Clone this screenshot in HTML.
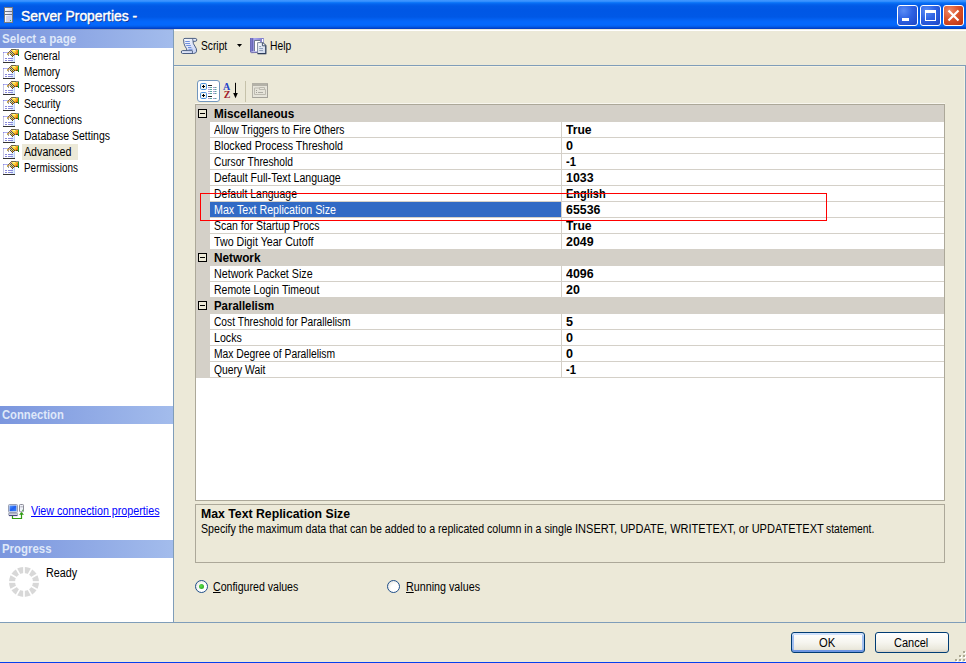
<!DOCTYPE html>
<html><head><meta charset="utf-8"><title>Server Properties</title>
<style>
*{box-sizing:border-box;margin:0;padding:0}
html,body{width:966px;height:663px;overflow:hidden;background:#ece9d8}
body{position:relative;font-family:"Liberation Sans",sans-serif;font-size:11px;color:#000}
.abs{position:absolute}
.t{position:absolute;white-space:pre;transform-origin:0 0}
svg{position:absolute;overflow:visible}
#titlebar{left:0;top:0;width:966px;height:29px;background:linear-gradient(to bottom,#3e96ff 0,#3a92ff 1.2px,#0c76f8 2.6px,#0464ee 4px,#015ae6 6px,#0057e5 10px,#0058e6 17px,#0463f4 20px,#0468fc 22px,#0468fc 25px,#035de9 26.5px,#0247d0 28px,#003cc0 29px)}
#left{left:0;top:29px;width:173px;height:593px;background:#fff}
.hdr{position:absolute;left:0;width:173px;height:18px;background:linear-gradient(to right,#7b96de,#a3bcec)}
#grid{left:195px;top:104px;width:750px;height:397px;background:#fff;border:1px solid #aca899}
.gl{position:absolute;left:210px;width:734px;height:1px;background:#d4d0c8}
.btn{position:absolute;height:21px;width:74px;border:1px solid #003c74;border-radius:3px;background:linear-gradient(to bottom,#fff 0,#f6f5ef 50%,#eae8dc 85%,#d6d0c5 100%)}
.cap{position:absolute;top:5px;width:21px;height:21px;border:1px solid #fff;border-radius:3px}
</style></head><body>

<!-- window chrome -->
<div id="titlebar" class="abs"></div>
<div id="left" class="abs"></div>
<div class="hdr" style="top:29px;height:19px"></div>
<div class="abs" style="left:0;top:29px;width:173px;height:1px;background:#8a9cc6"></div>
<div class="hdr" style="top:406px"></div>
<div class="hdr" style="top:540px"></div>
<!-- selected page -->
<div class="abs" style="left:22px;top:144px;width:56px;height:16px;background:#ece9d8"></div>
<!-- right panel frame -->
<div class="abs" style="left:173px;top:29px;width:1px;height:594px;background:#7f9db9"></div>
<div class="abs" style="left:174px;top:30px;width:792px;height:1px;background:#fff"></div>
<div class="abs" style="left:965px;top:65px;width:1px;height:558px;background:#7f9db9"></div>
<div class="abs" style="left:964px;top:66px;width:1px;height:556px;background:#f6f2e2"></div>
<div class="abs" style="left:0;top:622px;width:966px;height:1px;background:#7f9db9"></div>
<div class="abs" style="left:174px;top:65px;width:792px;height:1px;background:#7f9db9"></div>
<div class="abs" style="left:174px;top:66px;width:790px;height:1px;background:#f6f2e2"></div>
<!-- bottom blue edge -->
<div class="abs" style="left:0;top:662px;width:966px;height:1px;background:#0540ee;z-index:5"></div>
<!-- property grid -->
<div class="abs" style="left:195px;top:103px;width:750px;height:1px;background:#f8f6ee"></div>
<div id="grid" class="abs"></div>
<div class="abs" style="left:196px;top:105px;width:14px;height:273px;background:#d4d0c8"></div>
<div class="abs" style="left:196px;top:105px;width:748px;height:1px;background:#d4d0c8"></div>
<div class="abs" style="left:561px;top:122px;width:1px;height:256px;background:#d4d0c8"></div>
<!-- description -->
<div class="abs" style="left:195px;top:504px;width:750px;height:59px;border:1px solid #aca899"></div>
<!-- buttons -->
<div class="btn" style="left:791px;top:632px;box-shadow:inset 0 2px 0 #cfe1fb,inset 0 -2px 0 #6f96e2,inset 2px 0 0 #a3c0f0,inset -2px 0 0 #a3c0f0"></div>
<div class="btn" style="left:875px;top:632px"></div>

<div class="abs" style="left:196px;top:106px;width:748px;height:16px;background:#d4d0c8"></div>
<div class="abs" style="left:198px;top:109px;width:9px;height:9px;border:1px solid #000;background:#ece9d8"></div><div class="abs" style="left:200px;top:113px;width:5px;height:1px;background:#000"></div>
<div class="abs" style="left:210px;top:202px;width:351px;height:15px;background:#316ac5"></div>
<div class="abs" style="left:196px;top:250px;width:748px;height:16px;background:#d4d0c8"></div>
<div class="abs" style="left:198px;top:253px;width:9px;height:9px;border:1px solid #000;background:#ece9d8"></div><div class="abs" style="left:200px;top:257px;width:5px;height:1px;background:#000"></div>
<div class="abs" style="left:196px;top:298px;width:748px;height:16px;background:#d4d0c8"></div>
<div class="abs" style="left:198px;top:301px;width:9px;height:9px;border:1px solid #000;background:#ece9d8"></div><div class="abs" style="left:200px;top:305px;width:5px;height:1px;background:#000"></div>
<div class="gl" style="top:137px"></div>
<div class="gl" style="top:153px"></div>
<div class="gl" style="top:169px"></div>
<div class="gl" style="top:185px"></div>
<div class="gl" style="top:201px"></div>
<div class="gl" style="top:217px"></div>
<div class="gl" style="top:233px"></div>
<div class="gl" style="top:249px"></div>
<div class="gl" style="top:281px"></div>
<div class="gl" style="top:297px"></div>
<div class="gl" style="top:329px"></div>
<div class="gl" style="top:345px"></div>
<div class="gl" style="top:361px"></div>
<div class="gl" style="top:377px"></div>
<!-- title bar icon -->
<svg style="left:0;top:0" width="24" height="29" viewBox="0 0 24 29">
<defs><linearGradient id="sv" x1="0" y1="0" x2="1" y2="0"><stop offset="0" stop-color="#fff"/><stop offset="1" stop-color="#c9cfee"/></linearGradient></defs>
<rect x="4.5" y="7.5" width="8" height="15" fill="url(#sv)" stroke="#7b7b7b"/>
<rect x="5" y="11" width="7" height="1" fill="#6e7486"/><rect x="5" y="14" width="7" height="1" fill="#6e7486"/>
<rect x="6" y="16" width="5" height="6" fill="#c3c8ea" opacity=".7"/>
<rect x="10" y="20" width="1" height="1" fill="#35d01a"/>
</svg>
<!-- caption buttons -->
<div class="cap" style="left:897px;background:radial-gradient(circle at 30% 25%,#5a8cf5 0,#2e62e3 45%,#1c45c4 100%)"></div>
<div class="abs" style="left:902px;top:18px;width:7px;height:3px;background:#fff"></div>
<div class="cap" style="left:920px;background:radial-gradient(circle at 30% 25%,#5a8cf5 0,#2e62e3 45%,#1c45c4 100%)"></div>
<div class="abs" style="left:925px;top:10px;width:11px;height:11px;border:1px solid #fff;border-top-width:3px"></div>
<div class="cap" style="left:943px;background:radial-gradient(circle at 30% 25%,#ee8a68 0,#db532b 45%,#b83010 100%)"></div>
<svg style="left:943px;top:5px" width="21" height="21" viewBox="0 0 21 21"><path d="M5.5 5.5L15.5 15.5M15.5 5.5L5.5 15.5" stroke="#fff" stroke-width="2.2" stroke-linecap="butt"/></svg>

<svg style="left:0;top:48px" width="22" height="16" viewBox="0 0 22 16" shape-rendering="crispEdges">
<rect x="3.5" y="4.5" width="11" height="10" fill="#fff" stroke="#c6c6e4"/>
<rect x="11" y="9" width="3" height="5" fill="#dcecff"/>
<path d="M3 4.5H8" stroke="#b0b0f4"/><rect x="3" y="4" width="1" height="1" fill="#8c8ce4"/>
<path d="M14.5 8V14" stroke="#bcd0f8" fill="none"/>
<path d="M3 14.5H15" stroke="#333" fill="none"/>
<path d="M5 10.5h2M8 10.5h5M5 12.5h2M8 12.5h5" stroke="#8888da"/>
<rect x="11" y="1" width="1" height="1" fill="#6e6a48"/><rect x="12" y="1" width="1" height="1" fill="#6e6a48"/><rect x="13" y="1" width="1" height="1" fill="#6e6a48"/><rect x="14" y="1" width="1" height="1" fill="#6e6a48"/><rect x="15" y="1" width="1" height="1" fill="#6e6a48"/><rect x="16" y="1" width="1" height="1" fill="#8e8e88"/><rect x="17" y="1" width="1" height="1" fill="#8e8e88"/><rect x="18" y="1" width="1" height="1" fill="#8e8e88"/><rect x="10" y="2" width="1" height="1" fill="#6e6a48"/><rect x="11" y="2" width="1" height="1" fill="#f2b894"/><rect x="12" y="2" width="1" height="1" fill="#ffd83c"/><rect x="13" y="2" width="1" height="1" fill="#fff6a0"/><rect x="14" y="2" width="1" height="1" fill="#fff6a0"/><rect x="15" y="2" width="1" height="1" fill="#ffd83c"/><rect x="16" y="2" width="1" height="1" fill="#f8a820"/><rect x="17" y="2" width="1" height="1" fill="#f8a820"/><rect x="18" y="2" width="1" height="1" fill="#1f9e28"/><rect x="9" y="3" width="1" height="1" fill="#6e6a48"/><rect x="10" y="3" width="1" height="1" fill="#f2b894"/><rect x="11" y="3" width="1" height="1" fill="#45456c"/><rect x="12" y="3" width="1" height="1" fill="#f4ec50"/><rect x="13" y="3" width="1" height="1" fill="#ffd83c"/><rect x="14" y="3" width="1" height="1" fill="#ffd83c"/><rect x="15" y="3" width="1" height="1" fill="#ffd83c"/><rect x="16" y="3" width="1" height="1" fill="#f8a820"/><rect x="17" y="3" width="1" height="1" fill="#e07c10"/><rect x="18" y="3" width="1" height="1" fill="#1f9e28"/><rect x="8" y="4" width="1" height="1" fill="#6e6a48"/><rect x="9" y="4" width="1" height="1" fill="#f2b894"/><rect x="10" y="4" width="1" height="1" fill="#45456c"/><rect x="11" y="4" width="1" height="1" fill="#f4ec50"/><rect x="12" y="4" width="1" height="1" fill="#45456c"/><rect x="13" y="4" width="1" height="1" fill="#ffd83c"/><rect x="14" y="4" width="1" height="1" fill="#ffd83c"/><rect x="15" y="4" width="1" height="1" fill="#f8a820"/><rect x="16" y="4" width="1" height="1" fill="#f8a820"/><rect x="17" y="4" width="1" height="1" fill="#e07c10"/><rect x="18" y="4" width="1" height="1" fill="#1f9e28"/><rect x="7" y="5" width="1" height="1" fill="#c8a850"/><rect x="8" y="5" width="1" height="1" fill="#c8a850"/><rect x="9" y="5" width="1" height="1" fill="#f2b894"/><rect x="10" y="5" width="1" height="1" fill="#f4ec50"/><rect x="11" y="5" width="1" height="1" fill="#45456c"/><rect x="12" y="5" width="1" height="1" fill="#f4ec50"/><rect x="13" y="5" width="1" height="1" fill="#45456c"/><rect x="14" y="5" width="1" height="1" fill="#f8a820"/><rect x="15" y="5" width="1" height="1" fill="#f8a820"/><rect x="16" y="5" width="1" height="1" fill="#e07c10"/><rect x="17" y="5" width="1" height="1" fill="#e07c10"/><rect x="18" y="5" width="1" height="1" fill="#1f9e28"/><rect x="7" y="6" width="1" height="1" fill="#c8a850"/><rect x="8" y="6" width="1" height="1" fill="#9c9c9c"/><rect x="10" y="6" width="1" height="1" fill="#45456c"/><rect x="11" y="6" width="1" height="1" fill="#f4ec50"/><rect x="12" y="6" width="1" height="1" fill="#45456c"/><rect x="13" y="6" width="1" height="1" fill="#ffd83c"/><rect x="14" y="6" width="1" height="1" fill="#4c4a20"/><rect x="15" y="6" width="1" height="1" fill="#e07c10"/><rect x="16" y="6" width="1" height="1" fill="#4c4a20"/><rect x="17" y="6" width="1" height="1" fill="#4c4a20"/><rect x="18" y="6" width="1" height="1" fill="#1f9e28"/><rect x="8" y="7" width="1" height="1" fill="#9c9c9c"/><rect x="11" y="7" width="1" height="1" fill="#45456c"/><rect x="12" y="7" width="1" height="1" fill="#f8a820"/><rect x="13" y="7" width="1" height="1" fill="#45456c"/><rect x="18" y="7" width="1" height="1" fill="#157018"/><rect x="12" y="8" width="1" height="1" fill="#4c4a20"/>
</svg>
<svg style="left:0;top:64px" width="22" height="16" viewBox="0 0 22 16" shape-rendering="crispEdges">
<rect x="3.5" y="4.5" width="11" height="10" fill="#fff" stroke="#c6c6e4"/>
<rect x="11" y="9" width="3" height="5" fill="#dcecff"/>
<path d="M3 4.5H8" stroke="#b0b0f4"/><rect x="3" y="4" width="1" height="1" fill="#8c8ce4"/>
<path d="M14.5 8V14" stroke="#bcd0f8" fill="none"/>
<path d="M3 14.5H15" stroke="#333" fill="none"/>
<path d="M5 10.5h2M8 10.5h5M5 12.5h2M8 12.5h5" stroke="#8888da"/>
<rect x="11" y="1" width="1" height="1" fill="#6e6a48"/><rect x="12" y="1" width="1" height="1" fill="#6e6a48"/><rect x="13" y="1" width="1" height="1" fill="#6e6a48"/><rect x="14" y="1" width="1" height="1" fill="#6e6a48"/><rect x="15" y="1" width="1" height="1" fill="#6e6a48"/><rect x="16" y="1" width="1" height="1" fill="#8e8e88"/><rect x="17" y="1" width="1" height="1" fill="#8e8e88"/><rect x="18" y="1" width="1" height="1" fill="#8e8e88"/><rect x="10" y="2" width="1" height="1" fill="#6e6a48"/><rect x="11" y="2" width="1" height="1" fill="#f2b894"/><rect x="12" y="2" width="1" height="1" fill="#ffd83c"/><rect x="13" y="2" width="1" height="1" fill="#fff6a0"/><rect x="14" y="2" width="1" height="1" fill="#fff6a0"/><rect x="15" y="2" width="1" height="1" fill="#ffd83c"/><rect x="16" y="2" width="1" height="1" fill="#f8a820"/><rect x="17" y="2" width="1" height="1" fill="#f8a820"/><rect x="18" y="2" width="1" height="1" fill="#1f9e28"/><rect x="9" y="3" width="1" height="1" fill="#6e6a48"/><rect x="10" y="3" width="1" height="1" fill="#f2b894"/><rect x="11" y="3" width="1" height="1" fill="#45456c"/><rect x="12" y="3" width="1" height="1" fill="#f4ec50"/><rect x="13" y="3" width="1" height="1" fill="#ffd83c"/><rect x="14" y="3" width="1" height="1" fill="#ffd83c"/><rect x="15" y="3" width="1" height="1" fill="#ffd83c"/><rect x="16" y="3" width="1" height="1" fill="#f8a820"/><rect x="17" y="3" width="1" height="1" fill="#e07c10"/><rect x="18" y="3" width="1" height="1" fill="#1f9e28"/><rect x="8" y="4" width="1" height="1" fill="#6e6a48"/><rect x="9" y="4" width="1" height="1" fill="#f2b894"/><rect x="10" y="4" width="1" height="1" fill="#45456c"/><rect x="11" y="4" width="1" height="1" fill="#f4ec50"/><rect x="12" y="4" width="1" height="1" fill="#45456c"/><rect x="13" y="4" width="1" height="1" fill="#ffd83c"/><rect x="14" y="4" width="1" height="1" fill="#ffd83c"/><rect x="15" y="4" width="1" height="1" fill="#f8a820"/><rect x="16" y="4" width="1" height="1" fill="#f8a820"/><rect x="17" y="4" width="1" height="1" fill="#e07c10"/><rect x="18" y="4" width="1" height="1" fill="#1f9e28"/><rect x="7" y="5" width="1" height="1" fill="#c8a850"/><rect x="8" y="5" width="1" height="1" fill="#c8a850"/><rect x="9" y="5" width="1" height="1" fill="#f2b894"/><rect x="10" y="5" width="1" height="1" fill="#f4ec50"/><rect x="11" y="5" width="1" height="1" fill="#45456c"/><rect x="12" y="5" width="1" height="1" fill="#f4ec50"/><rect x="13" y="5" width="1" height="1" fill="#45456c"/><rect x="14" y="5" width="1" height="1" fill="#f8a820"/><rect x="15" y="5" width="1" height="1" fill="#f8a820"/><rect x="16" y="5" width="1" height="1" fill="#e07c10"/><rect x="17" y="5" width="1" height="1" fill="#e07c10"/><rect x="18" y="5" width="1" height="1" fill="#1f9e28"/><rect x="7" y="6" width="1" height="1" fill="#c8a850"/><rect x="8" y="6" width="1" height="1" fill="#9c9c9c"/><rect x="10" y="6" width="1" height="1" fill="#45456c"/><rect x="11" y="6" width="1" height="1" fill="#f4ec50"/><rect x="12" y="6" width="1" height="1" fill="#45456c"/><rect x="13" y="6" width="1" height="1" fill="#ffd83c"/><rect x="14" y="6" width="1" height="1" fill="#4c4a20"/><rect x="15" y="6" width="1" height="1" fill="#e07c10"/><rect x="16" y="6" width="1" height="1" fill="#4c4a20"/><rect x="17" y="6" width="1" height="1" fill="#4c4a20"/><rect x="18" y="6" width="1" height="1" fill="#1f9e28"/><rect x="8" y="7" width="1" height="1" fill="#9c9c9c"/><rect x="11" y="7" width="1" height="1" fill="#45456c"/><rect x="12" y="7" width="1" height="1" fill="#f8a820"/><rect x="13" y="7" width="1" height="1" fill="#45456c"/><rect x="18" y="7" width="1" height="1" fill="#157018"/><rect x="12" y="8" width="1" height="1" fill="#4c4a20"/>
</svg>
<svg style="left:0;top:80px" width="22" height="16" viewBox="0 0 22 16" shape-rendering="crispEdges">
<rect x="3.5" y="4.5" width="11" height="10" fill="#fff" stroke="#c6c6e4"/>
<rect x="11" y="9" width="3" height="5" fill="#dcecff"/>
<path d="M3 4.5H8" stroke="#b0b0f4"/><rect x="3" y="4" width="1" height="1" fill="#8c8ce4"/>
<path d="M14.5 8V14" stroke="#bcd0f8" fill="none"/>
<path d="M3 14.5H15" stroke="#333" fill="none"/>
<path d="M5 10.5h2M8 10.5h5M5 12.5h2M8 12.5h5" stroke="#8888da"/>
<rect x="11" y="1" width="1" height="1" fill="#6e6a48"/><rect x="12" y="1" width="1" height="1" fill="#6e6a48"/><rect x="13" y="1" width="1" height="1" fill="#6e6a48"/><rect x="14" y="1" width="1" height="1" fill="#6e6a48"/><rect x="15" y="1" width="1" height="1" fill="#6e6a48"/><rect x="16" y="1" width="1" height="1" fill="#8e8e88"/><rect x="17" y="1" width="1" height="1" fill="#8e8e88"/><rect x="18" y="1" width="1" height="1" fill="#8e8e88"/><rect x="10" y="2" width="1" height="1" fill="#6e6a48"/><rect x="11" y="2" width="1" height="1" fill="#f2b894"/><rect x="12" y="2" width="1" height="1" fill="#ffd83c"/><rect x="13" y="2" width="1" height="1" fill="#fff6a0"/><rect x="14" y="2" width="1" height="1" fill="#fff6a0"/><rect x="15" y="2" width="1" height="1" fill="#ffd83c"/><rect x="16" y="2" width="1" height="1" fill="#f8a820"/><rect x="17" y="2" width="1" height="1" fill="#f8a820"/><rect x="18" y="2" width="1" height="1" fill="#1f9e28"/><rect x="9" y="3" width="1" height="1" fill="#6e6a48"/><rect x="10" y="3" width="1" height="1" fill="#f2b894"/><rect x="11" y="3" width="1" height="1" fill="#45456c"/><rect x="12" y="3" width="1" height="1" fill="#f4ec50"/><rect x="13" y="3" width="1" height="1" fill="#ffd83c"/><rect x="14" y="3" width="1" height="1" fill="#ffd83c"/><rect x="15" y="3" width="1" height="1" fill="#ffd83c"/><rect x="16" y="3" width="1" height="1" fill="#f8a820"/><rect x="17" y="3" width="1" height="1" fill="#e07c10"/><rect x="18" y="3" width="1" height="1" fill="#1f9e28"/><rect x="8" y="4" width="1" height="1" fill="#6e6a48"/><rect x="9" y="4" width="1" height="1" fill="#f2b894"/><rect x="10" y="4" width="1" height="1" fill="#45456c"/><rect x="11" y="4" width="1" height="1" fill="#f4ec50"/><rect x="12" y="4" width="1" height="1" fill="#45456c"/><rect x="13" y="4" width="1" height="1" fill="#ffd83c"/><rect x="14" y="4" width="1" height="1" fill="#ffd83c"/><rect x="15" y="4" width="1" height="1" fill="#f8a820"/><rect x="16" y="4" width="1" height="1" fill="#f8a820"/><rect x="17" y="4" width="1" height="1" fill="#e07c10"/><rect x="18" y="4" width="1" height="1" fill="#1f9e28"/><rect x="7" y="5" width="1" height="1" fill="#c8a850"/><rect x="8" y="5" width="1" height="1" fill="#c8a850"/><rect x="9" y="5" width="1" height="1" fill="#f2b894"/><rect x="10" y="5" width="1" height="1" fill="#f4ec50"/><rect x="11" y="5" width="1" height="1" fill="#45456c"/><rect x="12" y="5" width="1" height="1" fill="#f4ec50"/><rect x="13" y="5" width="1" height="1" fill="#45456c"/><rect x="14" y="5" width="1" height="1" fill="#f8a820"/><rect x="15" y="5" width="1" height="1" fill="#f8a820"/><rect x="16" y="5" width="1" height="1" fill="#e07c10"/><rect x="17" y="5" width="1" height="1" fill="#e07c10"/><rect x="18" y="5" width="1" height="1" fill="#1f9e28"/><rect x="7" y="6" width="1" height="1" fill="#c8a850"/><rect x="8" y="6" width="1" height="1" fill="#9c9c9c"/><rect x="10" y="6" width="1" height="1" fill="#45456c"/><rect x="11" y="6" width="1" height="1" fill="#f4ec50"/><rect x="12" y="6" width="1" height="1" fill="#45456c"/><rect x="13" y="6" width="1" height="1" fill="#ffd83c"/><rect x="14" y="6" width="1" height="1" fill="#4c4a20"/><rect x="15" y="6" width="1" height="1" fill="#e07c10"/><rect x="16" y="6" width="1" height="1" fill="#4c4a20"/><rect x="17" y="6" width="1" height="1" fill="#4c4a20"/><rect x="18" y="6" width="1" height="1" fill="#1f9e28"/><rect x="8" y="7" width="1" height="1" fill="#9c9c9c"/><rect x="11" y="7" width="1" height="1" fill="#45456c"/><rect x="12" y="7" width="1" height="1" fill="#f8a820"/><rect x="13" y="7" width="1" height="1" fill="#45456c"/><rect x="18" y="7" width="1" height="1" fill="#157018"/><rect x="12" y="8" width="1" height="1" fill="#4c4a20"/>
</svg>
<svg style="left:0;top:96px" width="22" height="16" viewBox="0 0 22 16" shape-rendering="crispEdges">
<rect x="3.5" y="4.5" width="11" height="10" fill="#fff" stroke="#c6c6e4"/>
<rect x="11" y="9" width="3" height="5" fill="#dcecff"/>
<path d="M3 4.5H8" stroke="#b0b0f4"/><rect x="3" y="4" width="1" height="1" fill="#8c8ce4"/>
<path d="M14.5 8V14" stroke="#bcd0f8" fill="none"/>
<path d="M3 14.5H15" stroke="#333" fill="none"/>
<path d="M5 10.5h2M8 10.5h5M5 12.5h2M8 12.5h5" stroke="#8888da"/>
<rect x="11" y="1" width="1" height="1" fill="#6e6a48"/><rect x="12" y="1" width="1" height="1" fill="#6e6a48"/><rect x="13" y="1" width="1" height="1" fill="#6e6a48"/><rect x="14" y="1" width="1" height="1" fill="#6e6a48"/><rect x="15" y="1" width="1" height="1" fill="#6e6a48"/><rect x="16" y="1" width="1" height="1" fill="#8e8e88"/><rect x="17" y="1" width="1" height="1" fill="#8e8e88"/><rect x="18" y="1" width="1" height="1" fill="#8e8e88"/><rect x="10" y="2" width="1" height="1" fill="#6e6a48"/><rect x="11" y="2" width="1" height="1" fill="#f2b894"/><rect x="12" y="2" width="1" height="1" fill="#ffd83c"/><rect x="13" y="2" width="1" height="1" fill="#fff6a0"/><rect x="14" y="2" width="1" height="1" fill="#fff6a0"/><rect x="15" y="2" width="1" height="1" fill="#ffd83c"/><rect x="16" y="2" width="1" height="1" fill="#f8a820"/><rect x="17" y="2" width="1" height="1" fill="#f8a820"/><rect x="18" y="2" width="1" height="1" fill="#1f9e28"/><rect x="9" y="3" width="1" height="1" fill="#6e6a48"/><rect x="10" y="3" width="1" height="1" fill="#f2b894"/><rect x="11" y="3" width="1" height="1" fill="#45456c"/><rect x="12" y="3" width="1" height="1" fill="#f4ec50"/><rect x="13" y="3" width="1" height="1" fill="#ffd83c"/><rect x="14" y="3" width="1" height="1" fill="#ffd83c"/><rect x="15" y="3" width="1" height="1" fill="#ffd83c"/><rect x="16" y="3" width="1" height="1" fill="#f8a820"/><rect x="17" y="3" width="1" height="1" fill="#e07c10"/><rect x="18" y="3" width="1" height="1" fill="#1f9e28"/><rect x="8" y="4" width="1" height="1" fill="#6e6a48"/><rect x="9" y="4" width="1" height="1" fill="#f2b894"/><rect x="10" y="4" width="1" height="1" fill="#45456c"/><rect x="11" y="4" width="1" height="1" fill="#f4ec50"/><rect x="12" y="4" width="1" height="1" fill="#45456c"/><rect x="13" y="4" width="1" height="1" fill="#ffd83c"/><rect x="14" y="4" width="1" height="1" fill="#ffd83c"/><rect x="15" y="4" width="1" height="1" fill="#f8a820"/><rect x="16" y="4" width="1" height="1" fill="#f8a820"/><rect x="17" y="4" width="1" height="1" fill="#e07c10"/><rect x="18" y="4" width="1" height="1" fill="#1f9e28"/><rect x="7" y="5" width="1" height="1" fill="#c8a850"/><rect x="8" y="5" width="1" height="1" fill="#c8a850"/><rect x="9" y="5" width="1" height="1" fill="#f2b894"/><rect x="10" y="5" width="1" height="1" fill="#f4ec50"/><rect x="11" y="5" width="1" height="1" fill="#45456c"/><rect x="12" y="5" width="1" height="1" fill="#f4ec50"/><rect x="13" y="5" width="1" height="1" fill="#45456c"/><rect x="14" y="5" width="1" height="1" fill="#f8a820"/><rect x="15" y="5" width="1" height="1" fill="#f8a820"/><rect x="16" y="5" width="1" height="1" fill="#e07c10"/><rect x="17" y="5" width="1" height="1" fill="#e07c10"/><rect x="18" y="5" width="1" height="1" fill="#1f9e28"/><rect x="7" y="6" width="1" height="1" fill="#c8a850"/><rect x="8" y="6" width="1" height="1" fill="#9c9c9c"/><rect x="10" y="6" width="1" height="1" fill="#45456c"/><rect x="11" y="6" width="1" height="1" fill="#f4ec50"/><rect x="12" y="6" width="1" height="1" fill="#45456c"/><rect x="13" y="6" width="1" height="1" fill="#ffd83c"/><rect x="14" y="6" width="1" height="1" fill="#4c4a20"/><rect x="15" y="6" width="1" height="1" fill="#e07c10"/><rect x="16" y="6" width="1" height="1" fill="#4c4a20"/><rect x="17" y="6" width="1" height="1" fill="#4c4a20"/><rect x="18" y="6" width="1" height="1" fill="#1f9e28"/><rect x="8" y="7" width="1" height="1" fill="#9c9c9c"/><rect x="11" y="7" width="1" height="1" fill="#45456c"/><rect x="12" y="7" width="1" height="1" fill="#f8a820"/><rect x="13" y="7" width="1" height="1" fill="#45456c"/><rect x="18" y="7" width="1" height="1" fill="#157018"/><rect x="12" y="8" width="1" height="1" fill="#4c4a20"/>
</svg>
<svg style="left:0;top:112px" width="22" height="16" viewBox="0 0 22 16" shape-rendering="crispEdges">
<rect x="3.5" y="4.5" width="11" height="10" fill="#fff" stroke="#c6c6e4"/>
<rect x="11" y="9" width="3" height="5" fill="#dcecff"/>
<path d="M3 4.5H8" stroke="#b0b0f4"/><rect x="3" y="4" width="1" height="1" fill="#8c8ce4"/>
<path d="M14.5 8V14" stroke="#bcd0f8" fill="none"/>
<path d="M3 14.5H15" stroke="#333" fill="none"/>
<path d="M5 10.5h2M8 10.5h5M5 12.5h2M8 12.5h5" stroke="#8888da"/>
<rect x="11" y="1" width="1" height="1" fill="#6e6a48"/><rect x="12" y="1" width="1" height="1" fill="#6e6a48"/><rect x="13" y="1" width="1" height="1" fill="#6e6a48"/><rect x="14" y="1" width="1" height="1" fill="#6e6a48"/><rect x="15" y="1" width="1" height="1" fill="#6e6a48"/><rect x="16" y="1" width="1" height="1" fill="#8e8e88"/><rect x="17" y="1" width="1" height="1" fill="#8e8e88"/><rect x="18" y="1" width="1" height="1" fill="#8e8e88"/><rect x="10" y="2" width="1" height="1" fill="#6e6a48"/><rect x="11" y="2" width="1" height="1" fill="#f2b894"/><rect x="12" y="2" width="1" height="1" fill="#ffd83c"/><rect x="13" y="2" width="1" height="1" fill="#fff6a0"/><rect x="14" y="2" width="1" height="1" fill="#fff6a0"/><rect x="15" y="2" width="1" height="1" fill="#ffd83c"/><rect x="16" y="2" width="1" height="1" fill="#f8a820"/><rect x="17" y="2" width="1" height="1" fill="#f8a820"/><rect x="18" y="2" width="1" height="1" fill="#1f9e28"/><rect x="9" y="3" width="1" height="1" fill="#6e6a48"/><rect x="10" y="3" width="1" height="1" fill="#f2b894"/><rect x="11" y="3" width="1" height="1" fill="#45456c"/><rect x="12" y="3" width="1" height="1" fill="#f4ec50"/><rect x="13" y="3" width="1" height="1" fill="#ffd83c"/><rect x="14" y="3" width="1" height="1" fill="#ffd83c"/><rect x="15" y="3" width="1" height="1" fill="#ffd83c"/><rect x="16" y="3" width="1" height="1" fill="#f8a820"/><rect x="17" y="3" width="1" height="1" fill="#e07c10"/><rect x="18" y="3" width="1" height="1" fill="#1f9e28"/><rect x="8" y="4" width="1" height="1" fill="#6e6a48"/><rect x="9" y="4" width="1" height="1" fill="#f2b894"/><rect x="10" y="4" width="1" height="1" fill="#45456c"/><rect x="11" y="4" width="1" height="1" fill="#f4ec50"/><rect x="12" y="4" width="1" height="1" fill="#45456c"/><rect x="13" y="4" width="1" height="1" fill="#ffd83c"/><rect x="14" y="4" width="1" height="1" fill="#ffd83c"/><rect x="15" y="4" width="1" height="1" fill="#f8a820"/><rect x="16" y="4" width="1" height="1" fill="#f8a820"/><rect x="17" y="4" width="1" height="1" fill="#e07c10"/><rect x="18" y="4" width="1" height="1" fill="#1f9e28"/><rect x="7" y="5" width="1" height="1" fill="#c8a850"/><rect x="8" y="5" width="1" height="1" fill="#c8a850"/><rect x="9" y="5" width="1" height="1" fill="#f2b894"/><rect x="10" y="5" width="1" height="1" fill="#f4ec50"/><rect x="11" y="5" width="1" height="1" fill="#45456c"/><rect x="12" y="5" width="1" height="1" fill="#f4ec50"/><rect x="13" y="5" width="1" height="1" fill="#45456c"/><rect x="14" y="5" width="1" height="1" fill="#f8a820"/><rect x="15" y="5" width="1" height="1" fill="#f8a820"/><rect x="16" y="5" width="1" height="1" fill="#e07c10"/><rect x="17" y="5" width="1" height="1" fill="#e07c10"/><rect x="18" y="5" width="1" height="1" fill="#1f9e28"/><rect x="7" y="6" width="1" height="1" fill="#c8a850"/><rect x="8" y="6" width="1" height="1" fill="#9c9c9c"/><rect x="10" y="6" width="1" height="1" fill="#45456c"/><rect x="11" y="6" width="1" height="1" fill="#f4ec50"/><rect x="12" y="6" width="1" height="1" fill="#45456c"/><rect x="13" y="6" width="1" height="1" fill="#ffd83c"/><rect x="14" y="6" width="1" height="1" fill="#4c4a20"/><rect x="15" y="6" width="1" height="1" fill="#e07c10"/><rect x="16" y="6" width="1" height="1" fill="#4c4a20"/><rect x="17" y="6" width="1" height="1" fill="#4c4a20"/><rect x="18" y="6" width="1" height="1" fill="#1f9e28"/><rect x="8" y="7" width="1" height="1" fill="#9c9c9c"/><rect x="11" y="7" width="1" height="1" fill="#45456c"/><rect x="12" y="7" width="1" height="1" fill="#f8a820"/><rect x="13" y="7" width="1" height="1" fill="#45456c"/><rect x="18" y="7" width="1" height="1" fill="#157018"/><rect x="12" y="8" width="1" height="1" fill="#4c4a20"/>
</svg>
<svg style="left:0;top:128px" width="22" height="16" viewBox="0 0 22 16" shape-rendering="crispEdges">
<rect x="3.5" y="4.5" width="11" height="10" fill="#fff" stroke="#c6c6e4"/>
<rect x="11" y="9" width="3" height="5" fill="#dcecff"/>
<path d="M3 4.5H8" stroke="#b0b0f4"/><rect x="3" y="4" width="1" height="1" fill="#8c8ce4"/>
<path d="M14.5 8V14" stroke="#bcd0f8" fill="none"/>
<path d="M3 14.5H15" stroke="#333" fill="none"/>
<path d="M5 10.5h2M8 10.5h5M5 12.5h2M8 12.5h5" stroke="#8888da"/>
<rect x="11" y="1" width="1" height="1" fill="#6e6a48"/><rect x="12" y="1" width="1" height="1" fill="#6e6a48"/><rect x="13" y="1" width="1" height="1" fill="#6e6a48"/><rect x="14" y="1" width="1" height="1" fill="#6e6a48"/><rect x="15" y="1" width="1" height="1" fill="#6e6a48"/><rect x="16" y="1" width="1" height="1" fill="#8e8e88"/><rect x="17" y="1" width="1" height="1" fill="#8e8e88"/><rect x="18" y="1" width="1" height="1" fill="#8e8e88"/><rect x="10" y="2" width="1" height="1" fill="#6e6a48"/><rect x="11" y="2" width="1" height="1" fill="#f2b894"/><rect x="12" y="2" width="1" height="1" fill="#ffd83c"/><rect x="13" y="2" width="1" height="1" fill="#fff6a0"/><rect x="14" y="2" width="1" height="1" fill="#fff6a0"/><rect x="15" y="2" width="1" height="1" fill="#ffd83c"/><rect x="16" y="2" width="1" height="1" fill="#f8a820"/><rect x="17" y="2" width="1" height="1" fill="#f8a820"/><rect x="18" y="2" width="1" height="1" fill="#1f9e28"/><rect x="9" y="3" width="1" height="1" fill="#6e6a48"/><rect x="10" y="3" width="1" height="1" fill="#f2b894"/><rect x="11" y="3" width="1" height="1" fill="#45456c"/><rect x="12" y="3" width="1" height="1" fill="#f4ec50"/><rect x="13" y="3" width="1" height="1" fill="#ffd83c"/><rect x="14" y="3" width="1" height="1" fill="#ffd83c"/><rect x="15" y="3" width="1" height="1" fill="#ffd83c"/><rect x="16" y="3" width="1" height="1" fill="#f8a820"/><rect x="17" y="3" width="1" height="1" fill="#e07c10"/><rect x="18" y="3" width="1" height="1" fill="#1f9e28"/><rect x="8" y="4" width="1" height="1" fill="#6e6a48"/><rect x="9" y="4" width="1" height="1" fill="#f2b894"/><rect x="10" y="4" width="1" height="1" fill="#45456c"/><rect x="11" y="4" width="1" height="1" fill="#f4ec50"/><rect x="12" y="4" width="1" height="1" fill="#45456c"/><rect x="13" y="4" width="1" height="1" fill="#ffd83c"/><rect x="14" y="4" width="1" height="1" fill="#ffd83c"/><rect x="15" y="4" width="1" height="1" fill="#f8a820"/><rect x="16" y="4" width="1" height="1" fill="#f8a820"/><rect x="17" y="4" width="1" height="1" fill="#e07c10"/><rect x="18" y="4" width="1" height="1" fill="#1f9e28"/><rect x="7" y="5" width="1" height="1" fill="#c8a850"/><rect x="8" y="5" width="1" height="1" fill="#c8a850"/><rect x="9" y="5" width="1" height="1" fill="#f2b894"/><rect x="10" y="5" width="1" height="1" fill="#f4ec50"/><rect x="11" y="5" width="1" height="1" fill="#45456c"/><rect x="12" y="5" width="1" height="1" fill="#f4ec50"/><rect x="13" y="5" width="1" height="1" fill="#45456c"/><rect x="14" y="5" width="1" height="1" fill="#f8a820"/><rect x="15" y="5" width="1" height="1" fill="#f8a820"/><rect x="16" y="5" width="1" height="1" fill="#e07c10"/><rect x="17" y="5" width="1" height="1" fill="#e07c10"/><rect x="18" y="5" width="1" height="1" fill="#1f9e28"/><rect x="7" y="6" width="1" height="1" fill="#c8a850"/><rect x="8" y="6" width="1" height="1" fill="#9c9c9c"/><rect x="10" y="6" width="1" height="1" fill="#45456c"/><rect x="11" y="6" width="1" height="1" fill="#f4ec50"/><rect x="12" y="6" width="1" height="1" fill="#45456c"/><rect x="13" y="6" width="1" height="1" fill="#ffd83c"/><rect x="14" y="6" width="1" height="1" fill="#4c4a20"/><rect x="15" y="6" width="1" height="1" fill="#e07c10"/><rect x="16" y="6" width="1" height="1" fill="#4c4a20"/><rect x="17" y="6" width="1" height="1" fill="#4c4a20"/><rect x="18" y="6" width="1" height="1" fill="#1f9e28"/><rect x="8" y="7" width="1" height="1" fill="#9c9c9c"/><rect x="11" y="7" width="1" height="1" fill="#45456c"/><rect x="12" y="7" width="1" height="1" fill="#f8a820"/><rect x="13" y="7" width="1" height="1" fill="#45456c"/><rect x="18" y="7" width="1" height="1" fill="#157018"/><rect x="12" y="8" width="1" height="1" fill="#4c4a20"/>
</svg>
<svg style="left:0;top:144px" width="22" height="16" viewBox="0 0 22 16" shape-rendering="crispEdges">
<rect x="3.5" y="4.5" width="11" height="10" fill="#fff" stroke="#c6c6e4"/>
<rect x="11" y="9" width="3" height="5" fill="#dcecff"/>
<path d="M3 4.5H8" stroke="#b0b0f4"/><rect x="3" y="4" width="1" height="1" fill="#8c8ce4"/>
<path d="M14.5 8V14" stroke="#bcd0f8" fill="none"/>
<path d="M3 14.5H15" stroke="#333" fill="none"/>
<path d="M5 10.5h2M8 10.5h5M5 12.5h2M8 12.5h5" stroke="#8888da"/>
<rect x="11" y="1" width="1" height="1" fill="#6e6a48"/><rect x="12" y="1" width="1" height="1" fill="#6e6a48"/><rect x="13" y="1" width="1" height="1" fill="#6e6a48"/><rect x="14" y="1" width="1" height="1" fill="#6e6a48"/><rect x="15" y="1" width="1" height="1" fill="#6e6a48"/><rect x="16" y="1" width="1" height="1" fill="#8e8e88"/><rect x="17" y="1" width="1" height="1" fill="#8e8e88"/><rect x="18" y="1" width="1" height="1" fill="#8e8e88"/><rect x="10" y="2" width="1" height="1" fill="#6e6a48"/><rect x="11" y="2" width="1" height="1" fill="#f2b894"/><rect x="12" y="2" width="1" height="1" fill="#ffd83c"/><rect x="13" y="2" width="1" height="1" fill="#fff6a0"/><rect x="14" y="2" width="1" height="1" fill="#fff6a0"/><rect x="15" y="2" width="1" height="1" fill="#ffd83c"/><rect x="16" y="2" width="1" height="1" fill="#f8a820"/><rect x="17" y="2" width="1" height="1" fill="#f8a820"/><rect x="18" y="2" width="1" height="1" fill="#1f9e28"/><rect x="9" y="3" width="1" height="1" fill="#6e6a48"/><rect x="10" y="3" width="1" height="1" fill="#f2b894"/><rect x="11" y="3" width="1" height="1" fill="#45456c"/><rect x="12" y="3" width="1" height="1" fill="#f4ec50"/><rect x="13" y="3" width="1" height="1" fill="#ffd83c"/><rect x="14" y="3" width="1" height="1" fill="#ffd83c"/><rect x="15" y="3" width="1" height="1" fill="#ffd83c"/><rect x="16" y="3" width="1" height="1" fill="#f8a820"/><rect x="17" y="3" width="1" height="1" fill="#e07c10"/><rect x="18" y="3" width="1" height="1" fill="#1f9e28"/><rect x="8" y="4" width="1" height="1" fill="#6e6a48"/><rect x="9" y="4" width="1" height="1" fill="#f2b894"/><rect x="10" y="4" width="1" height="1" fill="#45456c"/><rect x="11" y="4" width="1" height="1" fill="#f4ec50"/><rect x="12" y="4" width="1" height="1" fill="#45456c"/><rect x="13" y="4" width="1" height="1" fill="#ffd83c"/><rect x="14" y="4" width="1" height="1" fill="#ffd83c"/><rect x="15" y="4" width="1" height="1" fill="#f8a820"/><rect x="16" y="4" width="1" height="1" fill="#f8a820"/><rect x="17" y="4" width="1" height="1" fill="#e07c10"/><rect x="18" y="4" width="1" height="1" fill="#1f9e28"/><rect x="7" y="5" width="1" height="1" fill="#c8a850"/><rect x="8" y="5" width="1" height="1" fill="#c8a850"/><rect x="9" y="5" width="1" height="1" fill="#f2b894"/><rect x="10" y="5" width="1" height="1" fill="#f4ec50"/><rect x="11" y="5" width="1" height="1" fill="#45456c"/><rect x="12" y="5" width="1" height="1" fill="#f4ec50"/><rect x="13" y="5" width="1" height="1" fill="#45456c"/><rect x="14" y="5" width="1" height="1" fill="#f8a820"/><rect x="15" y="5" width="1" height="1" fill="#f8a820"/><rect x="16" y="5" width="1" height="1" fill="#e07c10"/><rect x="17" y="5" width="1" height="1" fill="#e07c10"/><rect x="18" y="5" width="1" height="1" fill="#1f9e28"/><rect x="7" y="6" width="1" height="1" fill="#c8a850"/><rect x="8" y="6" width="1" height="1" fill="#9c9c9c"/><rect x="10" y="6" width="1" height="1" fill="#45456c"/><rect x="11" y="6" width="1" height="1" fill="#f4ec50"/><rect x="12" y="6" width="1" height="1" fill="#45456c"/><rect x="13" y="6" width="1" height="1" fill="#ffd83c"/><rect x="14" y="6" width="1" height="1" fill="#4c4a20"/><rect x="15" y="6" width="1" height="1" fill="#e07c10"/><rect x="16" y="6" width="1" height="1" fill="#4c4a20"/><rect x="17" y="6" width="1" height="1" fill="#4c4a20"/><rect x="18" y="6" width="1" height="1" fill="#1f9e28"/><rect x="8" y="7" width="1" height="1" fill="#9c9c9c"/><rect x="11" y="7" width="1" height="1" fill="#45456c"/><rect x="12" y="7" width="1" height="1" fill="#f8a820"/><rect x="13" y="7" width="1" height="1" fill="#45456c"/><rect x="18" y="7" width="1" height="1" fill="#157018"/><rect x="12" y="8" width="1" height="1" fill="#4c4a20"/>
</svg>
<svg style="left:0;top:160px" width="22" height="16" viewBox="0 0 22 16" shape-rendering="crispEdges">
<rect x="3.5" y="4.5" width="11" height="10" fill="#fff" stroke="#c6c6e4"/>
<rect x="11" y="9" width="3" height="5" fill="#dcecff"/>
<path d="M3 4.5H8" stroke="#b0b0f4"/><rect x="3" y="4" width="1" height="1" fill="#8c8ce4"/>
<path d="M14.5 8V14" stroke="#bcd0f8" fill="none"/>
<path d="M3 14.5H15" stroke="#333" fill="none"/>
<path d="M5 10.5h2M8 10.5h5M5 12.5h2M8 12.5h5" stroke="#8888da"/>
<rect x="11" y="1" width="1" height="1" fill="#6e6a48"/><rect x="12" y="1" width="1" height="1" fill="#6e6a48"/><rect x="13" y="1" width="1" height="1" fill="#6e6a48"/><rect x="14" y="1" width="1" height="1" fill="#6e6a48"/><rect x="15" y="1" width="1" height="1" fill="#6e6a48"/><rect x="16" y="1" width="1" height="1" fill="#8e8e88"/><rect x="17" y="1" width="1" height="1" fill="#8e8e88"/><rect x="18" y="1" width="1" height="1" fill="#8e8e88"/><rect x="10" y="2" width="1" height="1" fill="#6e6a48"/><rect x="11" y="2" width="1" height="1" fill="#f2b894"/><rect x="12" y="2" width="1" height="1" fill="#ffd83c"/><rect x="13" y="2" width="1" height="1" fill="#fff6a0"/><rect x="14" y="2" width="1" height="1" fill="#fff6a0"/><rect x="15" y="2" width="1" height="1" fill="#ffd83c"/><rect x="16" y="2" width="1" height="1" fill="#f8a820"/><rect x="17" y="2" width="1" height="1" fill="#f8a820"/><rect x="18" y="2" width="1" height="1" fill="#1f9e28"/><rect x="9" y="3" width="1" height="1" fill="#6e6a48"/><rect x="10" y="3" width="1" height="1" fill="#f2b894"/><rect x="11" y="3" width="1" height="1" fill="#45456c"/><rect x="12" y="3" width="1" height="1" fill="#f4ec50"/><rect x="13" y="3" width="1" height="1" fill="#ffd83c"/><rect x="14" y="3" width="1" height="1" fill="#ffd83c"/><rect x="15" y="3" width="1" height="1" fill="#ffd83c"/><rect x="16" y="3" width="1" height="1" fill="#f8a820"/><rect x="17" y="3" width="1" height="1" fill="#e07c10"/><rect x="18" y="3" width="1" height="1" fill="#1f9e28"/><rect x="8" y="4" width="1" height="1" fill="#6e6a48"/><rect x="9" y="4" width="1" height="1" fill="#f2b894"/><rect x="10" y="4" width="1" height="1" fill="#45456c"/><rect x="11" y="4" width="1" height="1" fill="#f4ec50"/><rect x="12" y="4" width="1" height="1" fill="#45456c"/><rect x="13" y="4" width="1" height="1" fill="#ffd83c"/><rect x="14" y="4" width="1" height="1" fill="#ffd83c"/><rect x="15" y="4" width="1" height="1" fill="#f8a820"/><rect x="16" y="4" width="1" height="1" fill="#f8a820"/><rect x="17" y="4" width="1" height="1" fill="#e07c10"/><rect x="18" y="4" width="1" height="1" fill="#1f9e28"/><rect x="7" y="5" width="1" height="1" fill="#c8a850"/><rect x="8" y="5" width="1" height="1" fill="#c8a850"/><rect x="9" y="5" width="1" height="1" fill="#f2b894"/><rect x="10" y="5" width="1" height="1" fill="#f4ec50"/><rect x="11" y="5" width="1" height="1" fill="#45456c"/><rect x="12" y="5" width="1" height="1" fill="#f4ec50"/><rect x="13" y="5" width="1" height="1" fill="#45456c"/><rect x="14" y="5" width="1" height="1" fill="#f8a820"/><rect x="15" y="5" width="1" height="1" fill="#f8a820"/><rect x="16" y="5" width="1" height="1" fill="#e07c10"/><rect x="17" y="5" width="1" height="1" fill="#e07c10"/><rect x="18" y="5" width="1" height="1" fill="#1f9e28"/><rect x="7" y="6" width="1" height="1" fill="#c8a850"/><rect x="8" y="6" width="1" height="1" fill="#9c9c9c"/><rect x="10" y="6" width="1" height="1" fill="#45456c"/><rect x="11" y="6" width="1" height="1" fill="#f4ec50"/><rect x="12" y="6" width="1" height="1" fill="#45456c"/><rect x="13" y="6" width="1" height="1" fill="#ffd83c"/><rect x="14" y="6" width="1" height="1" fill="#4c4a20"/><rect x="15" y="6" width="1" height="1" fill="#e07c10"/><rect x="16" y="6" width="1" height="1" fill="#4c4a20"/><rect x="17" y="6" width="1" height="1" fill="#4c4a20"/><rect x="18" y="6" width="1" height="1" fill="#1f9e28"/><rect x="8" y="7" width="1" height="1" fill="#9c9c9c"/><rect x="11" y="7" width="1" height="1" fill="#45456c"/><rect x="12" y="7" width="1" height="1" fill="#f8a820"/><rect x="13" y="7" width="1" height="1" fill="#45456c"/><rect x="18" y="7" width="1" height="1" fill="#157018"/><rect x="12" y="8" width="1" height="1" fill="#4c4a20"/>
</svg>
<!-- Script icon -->
<svg style="left:178px;top:34px" width="24" height="24" viewBox="0 0 24 24">
<defs><linearGradient id="sc" x1="0" y1="0" x2="1" y2="1"><stop offset="0" stop-color="#fff"/><stop offset="1" stop-color="#c4d0f2"/></linearGradient></defs>
<path d="M5.6 5.3Q5.6 4.4 7 4.4L17.2 4.4Q18.8 4.4 18.8 5.9Q18.8 7.3 17.2 7.3L15 7.3Q15 9.8 16.8 12Q18.9 14.6 18.6 17.2Q18.2 19.5 15.5 19.5L4.6 19.5Q3.3 19.5 3.3 18Q3.3 16.6 4.6 16.6L9 16.6Q8.6 14.2 7 12.2Q5.6 10.2 5.6 5.3Z" fill="url(#sc)" stroke="#4b5e82" stroke-width="1"/>
<path d="M9 16.6L14.3 16.6Q14.8 18 14.3 19.3" fill="none" stroke="#4b5e82" stroke-width=".9"/>
<path d="M15 7.3L14.6 4.6" fill="none" stroke="#4b5e82" stroke-width=".8"/>
<path d="M7.2 7.5h4.6M7.2 9.5h4.8M8.2 11.5h4.6M10 13.5h3.4M10.5 15.3h4" stroke="#6f8fdc" stroke-width="1"/>
</svg>
<!-- dropdown arrow -->
<svg style="left:237px;top:44px" width="5" height="3" viewBox="0 0 5 3"><path d="M0 0H5L2.5 3Z" fill="#000"/></svg>
<!-- Help icon -->
<svg style="left:246px;top:34px" width="24" height="24" viewBox="0 0 24 24">
<defs><linearGradient id="bk" x1="0" y1="0" x2="1" y2="0"><stop offset="0" stop-color="#6664b4"/><stop offset=".18" stop-color="#8a88d4"/><stop offset=".3" stop-color="#aaa8ee"/><stop offset="1" stop-color="#7a78c6"/></linearGradient>
<linearGradient id="dc" x1="0" y1="0" x2="1" y2="1"><stop offset="0" stop-color="#fff"/><stop offset="1" stop-color="#c8d4ea"/></linearGradient></defs>
<path d="M4 4H17.8V18L5.5 18.6L4 17.5Z" fill="url(#bk)"/>
<rect x="16" y="5" width="1.2" height="4.5" fill="#fff"/><path d="M6.6 4.3V18.3" stroke="#5c5aa8" stroke-width=".8"/><path d="M4 17.6L5.5 18.7L17.8 18.2" fill="none" stroke="#5a58a0" stroke-width=".8"/>
<path d="M8.5 17.4V6.6H14.5" fill="#fff" stroke="#5a6478" stroke-width=".9"/>
<rect x="8.9" y="7" width="5" height="10.4" fill="#fff"/>
<path d="M5.5 17.6H9" stroke="#c6c6ee" stroke-width=".8"/>
<path d="M11.6 8.6H16.6L19.8 11.6V19.6H11.6Z" fill="url(#dc)" stroke="#6f7c92" stroke-width=".9"/><path d="M16.6 8.6L19.8 11.6V19.6H11.6" fill="none" stroke="#2c3c5a" stroke-width="1.1"/>
<path d="M16.4 8.6V11.8H19.8" fill="#eef2fa" stroke="#34455f" stroke-width=".9"/>
<path d="M13.2 12.6h2M13.2 14.6h3.8M13.2 16.6h3.8" stroke="#8a9ab8" stroke-width="1"/>
</svg>
<!-- categorized button -->
<div class="abs" style="left:197px;top:80px;width:23px;height:22px;border:1px solid #7196be;border-radius:3px;background:#fff"></div>
<svg style="left:194px;top:76px" width="50" height="30" viewBox="0 0 50 30">
<rect x="6.5" y="7.5" width="6" height="6" rx="1.2" fill="#f4f4f0" stroke="#4d92de"/>
<rect x="6.5" y="16.5" width="6" height="6" rx="1.2" fill="#f4f4f0" stroke="#4d92de"/>
<path d="M8 10.5h3M9.5 9v3M8 19.5h3M9.5 18v3" stroke="#000" stroke-width="1"/>
<path d="M14 9.5h4M14 20.5h4" stroke="#222" stroke-width="1"/>
<g stroke-width="1"><path d="M14 11.5h2M14 13.5h2M14 15.5h2M14 17.5h2M14 22.5h2M19 11.5h2M19 13.5h2M19 15.5h2M19 17.5h2M19 22.5h2" stroke="#a8a2d2"/><path d="M16 11.5h2M16 13.5h2M16 15.5h2M16 17.5h2M16 22.5h2M21 11.5h1.5M21 13.5h1.5M21 15.5h1.5M21 17.5h1.5M21 22.5h1.5" stroke="#5aa6a0"/></g>
<text x="32.5" y="14" text-anchor="middle" font-family="Liberation Serif,serif" font-weight="bold" font-size="10" fill="#2442c8">A</text>
<text x="33" y="22.2" text-anchor="middle" font-family="Liberation Serif,serif" font-weight="bold" font-size="10" fill="#a0202c">Z</text>
<path d="M41.5 6.8V20" stroke="#000" stroke-width="1"/>
<path d="M39.2 17H43.8L41.5 22.3Z" fill="#000"/>
</svg>
<!-- separator -->
<div class="abs" style="left:245px;top:81px;width:1px;height:21px;background:#c6c2aa"></div>
<!-- disabled property pages icon -->
<svg style="left:240px;top:76px" width="40" height="30" viewBox="0 0 40 30">
<rect x="12.5" y="7.5" width="15" height="14" fill="#e6e4da" stroke="#b2b0a6"/>
<rect x="13" y="8" width="14" height="2" fill="#b4b2a8"/>
<path d="M12.5 21.5H27.5V8" stroke="#a4a29a" fill="none"/>
<path d="M14.5 18.5V12H19.5V13.5H25.5V18.5Z" fill="none" stroke="#bcbab0"/>
<path d="M19.5 13.5V11.5H24.5V13.5" fill="none" stroke="#bcbab0"/>
<rect x="16" y="14" width="1" height="1" fill="#a09e96"/><rect x="16" y="16" width="1" height="1" fill="#a09e96"/>
<rect x="18" y="16" width="5" height="1" fill="#aeaca4"/>
</svg>
<!-- connection icon -->
<svg style="left:0;top:500px" width="40" height="25" viewBox="0 0 40 25">
<defs><linearGradient id="scr" x1="0" y1="0" x2="1" y2="1"><stop offset="0" stop-color="#5a9cff"/><stop offset=".5" stop-color="#1f5ff0"/><stop offset="1" stop-color="#3f86f8"/></linearGradient></defs>
<rect x="8.5" y="4.5" width="9" height="8" rx="1" fill="#d8dce8" stroke="#9aa0b4"/>
<rect x="9.6" y="5.6" width="6.8" height="5.6" fill="url(#scr)"/>
<path d="M8.6 13.4H17.6V15.2H8.6Z" fill="#e4e6f0" stroke="#8890a8" stroke-width=".7"/>
<path d="M9 15.6H17.4" stroke="#2c2c6c" stroke-width=".9"/>
<rect x="19.5" y="4.5" width="4" height="7.3" rx=".8" fill="#f0f2fa" stroke="#8c8c98"/>
<path d="M20.4 6.8h2.4" stroke="#8c8c98" stroke-width=".7"/>
<rect x="22" y="9.8" width="1" height="1" fill="#3cc030"/>
<path d="M12.5 16V18.5H21.5V13" fill="none" stroke="#2e9a10" stroke-width="1.2"/>
<path d="M19 14.8L21.5 12L24 14.8Z" fill="#2e9a10"/>
</svg>
<!-- progress spinner -->
<svg style="left:8px;top:566px" width="32" height="32" viewBox="-16 -16 32 32">
<circle cx="0" cy="0" r="12" fill="none" stroke="#d8d8d8" stroke-width="6"/>
<path d="M-16.00 -0.00L16.00 0.00" stroke="#fff" stroke-width="1.7"/><path d="M-13.86 -8.00L13.86 8.00" stroke="#fff" stroke-width="1.7"/><path d="M-8.00 -13.86L8.00 13.86" stroke="#fff" stroke-width="1.7"/><path d="M-0.00 -16.00L0.00 16.00" stroke="#fff" stroke-width="1.7"/><path d="M8.00 -13.86L-8.00 13.86" stroke="#fff" stroke-width="1.7"/><path d="M13.86 -8.00L-13.86 8.00" stroke="#fff" stroke-width="1.7"/>
</svg>
<!-- radio buttons -->
<div class="abs" style="left:195px;top:580px;width:13px;height:13px;border-radius:50%;border:1px solid #1f4f8a;background:radial-gradient(circle at 65% 65%,#fff 40%,#dcdcd4 100%)"></div>
<div class="abs" style="left:199px;top:584px;width:5px;height:5px;border-radius:50%;background:radial-gradient(circle at 40% 40%,#5ee04a,#1f9a1a)"></div>
<div class="abs" style="left:387px;top:580px;width:13px;height:13px;border-radius:50%;border:1px solid #1f4f8a;background:radial-gradient(circle at 65% 65%,#fff 40%,#dcdcd4 100%)"></div>
<!-- size grip -->
<div class="abs" style="left:956px;top:660px;width:2px;height:2px;background:#fff"></div><div class="abs" style="left:960px;top:660px;width:2px;height:2px;background:#fff"></div><div class="abs" style="left:964px;top:660px;width:2px;height:2px;background:#fff"></div><div class="abs" style="left:960px;top:656px;width:2px;height:2px;background:#fff"></div><div class="abs" style="left:964px;top:656px;width:2px;height:2px;background:#fff"></div><div class="abs" style="left:964px;top:652px;width:2px;height:2px;background:#fff"></div><div class="abs" style="left:955px;top:659px;width:2px;height:2px;background:#aca892"></div><div class="abs" style="left:959px;top:659px;width:2px;height:2px;background:#aca892"></div><div class="abs" style="left:963px;top:659px;width:2px;height:2px;background:#aca892"></div><div class="abs" style="left:959px;top:655px;width:2px;height:2px;background:#aca892"></div><div class="abs" style="left:963px;top:655px;width:2px;height:2px;background:#aca892"></div><div class="abs" style="left:963px;top:651px;width:2px;height:2px;background:#aca892"></div>

<div class="t" style="left:21.0px;top:8px;font-size:14px;line-height:16px;color:#fff;transform:scaleX(0.9874);-webkit-text-stroke:0.45px #fff;text-shadow:1px 1px 0 #0a318f">Server Properties -</div>
<div class="t" style="left:1.7px;top:32px;font-size:12px;line-height:14px;color:#dfe8f9;transform:scaleX(0.9685);font-weight:bold;">Select a page</div>
<div class="t" style="left:1.7px;top:408px;font-size:12px;line-height:14px;color:#dfe8f9;transform:scaleX(0.9364);font-weight:bold;">Connection</div>
<div class="t" style="left:1.5px;top:542px;font-size:12px;line-height:14px;color:#dfe8f9;transform:scaleX(0.9514);font-weight:bold;">Progress</div>
<div class="t" style="left:24.3px;top:49px;font-size:12px;line-height:14px;color:#000;transform:scaleX(0.8430);">General</div>
<div class="t" style="left:24.3px;top:65px;font-size:12px;line-height:14px;color:#000;transform:scaleX(0.8306);">Memory</div>
<div class="t" style="left:24.3px;top:81px;font-size:12px;line-height:14px;color:#000;transform:scaleX(0.8446);">Processors</div>
<div class="t" style="left:24.3px;top:97px;font-size:12px;line-height:14px;color:#000;transform:scaleX(0.8441);">Security</div>
<div class="t" style="left:24.3px;top:113px;font-size:12px;line-height:14px;color:#000;transform:scaleX(0.8693);">Connections</div>
<div class="t" style="left:24.3px;top:129px;font-size:12px;line-height:14px;color:#000;transform:scaleX(0.8770);">Database Settings</div>
<div class="t" style="left:24.3px;top:145px;font-size:12px;line-height:14px;color:#000;transform:scaleX(0.8899);">Advanced</div>
<div class="t" style="left:24.3px;top:161px;font-size:12px;line-height:14px;color:#000;transform:scaleX(0.8262);">Permissions</div>
<div class="t" style="left:31.0px;top:504px;font-size:12px;line-height:14px;color:#0000ff;transform:scaleX(0.8931);text-decoration:underline">View connection properties</div>
<div class="t" style="left:46.4px;top:566px;font-size:12px;line-height:14px;color:#000;transform:scaleX(0.8995);">Ready</div>
<div class="t" style="left:200.8px;top:39px;font-size:12px;line-height:14px;color:#000;transform:scaleX(0.8538);">Script</div>
<div class="t" style="left:270.0px;top:39px;font-size:12px;line-height:14px;color:#000;transform:scaleX(0.8587);">Help</div>
<div class="t" style="left:213.6px;top:107px;font-size:12px;line-height:14px;color:#000;transform:scaleX(0.9789);font-weight:bold;">Miscellaneous</div>
<div class="t" style="left:214.4px;top:123px;font-size:12px;line-height:14px;color:#000;transform:scaleX(0.8576);">Allow Triggers to Fire Others</div>
<div class="t" style="left:565.5px;top:123px;font-size:12px;line-height:14px;color:#000;transform:scaleX(1.0101);font-weight:bold;">True</div>
<div class="t" style="left:214.4px;top:139px;font-size:12px;line-height:14px;color:#000;transform:scaleX(0.8844);">Blocked Process Threshold</div>
<div class="t" style="left:565.5px;top:139px;font-size:12px;line-height:14px;color:#000;transform:scaleX(1.0467);font-weight:bold;">0</div>
<div class="t" style="left:214.4px;top:155px;font-size:12px;line-height:14px;color:#000;transform:scaleX(0.8542);">Cursor Threshold</div>
<div class="t" style="left:565.5px;top:155px;font-size:12px;line-height:14px;color:#000;transform:scaleX(0.9370);font-weight:bold;">-1</div>
<div class="t" style="left:214.4px;top:171px;font-size:12px;line-height:14px;color:#000;transform:scaleX(0.8834);">Default Full-Text Language</div>
<div class="t" style="left:565.5px;top:171px;font-size:12px;line-height:14px;color:#000;transform:scaleX(1.0336);font-weight:bold;">1033</div>
<div class="t" style="left:214.4px;top:187px;font-size:12px;line-height:14px;color:#000;transform:scaleX(0.8760);">Default Language</div>
<div class="t" style="left:565.5px;top:187px;font-size:12px;line-height:14px;color:#000;transform:scaleX(0.9136);font-weight:bold;">English</div>
<div class="t" style="left:214.4px;top:203px;font-size:12px;line-height:14px;color:#fff;transform:scaleX(0.8893);">Max Text Replication Size</div>
<div class="t" style="left:565.5px;top:203px;font-size:12px;line-height:14px;color:#000;transform:scaleX(1.0307);font-weight:bold;">65536</div>
<div class="t" style="left:214.4px;top:219px;font-size:12px;line-height:14px;color:#000;transform:scaleX(0.8746);">Scan for Startup Procs</div>
<div class="t" style="left:565.5px;top:219px;font-size:12px;line-height:14px;color:#000;transform:scaleX(1.0101);font-weight:bold;">True</div>
<div class="t" style="left:214.4px;top:235px;font-size:12px;line-height:14px;color:#000;transform:scaleX(0.8887);">Two Digit Year Cutoff</div>
<div class="t" style="left:565.5px;top:235px;font-size:12px;line-height:14px;color:#000;transform:scaleX(1.0336);font-weight:bold;">2049</div>
<div class="t" style="left:213.6px;top:251px;font-size:12px;line-height:14px;color:#000;transform:scaleX(0.9822);font-weight:bold;">Network</div>
<div class="t" style="left:214.4px;top:267px;font-size:12px;line-height:14px;color:#000;transform:scaleX(0.8905);">Network Packet Size</div>
<div class="t" style="left:565.5px;top:267px;font-size:12px;line-height:14px;color:#000;transform:scaleX(1.0336);font-weight:bold;">4096</div>
<div class="t" style="left:214.4px;top:283px;font-size:12px;line-height:14px;color:#000;transform:scaleX(0.8722);">Remote Login Timeout</div>
<div class="t" style="left:565.5px;top:283px;font-size:12px;line-height:14px;color:#000;transform:scaleX(1.0330);font-weight:bold;">20</div>
<div class="t" style="left:213.6px;top:299px;font-size:12px;line-height:14px;color:#000;transform:scaleX(0.9499);font-weight:bold;">Parallelism</div>
<div class="t" style="left:214.4px;top:315px;font-size:12px;line-height:14px;color:#000;transform:scaleX(0.8510);">Cost Threshold for Parallelism</div>
<div class="t" style="left:565.5px;top:315px;font-size:12px;line-height:14px;color:#000;transform:scaleX(1.0467);font-weight:bold;">5</div>
<div class="t" style="left:214.4px;top:331px;font-size:12px;line-height:14px;color:#000;transform:scaleX(0.8865);">Locks</div>
<div class="t" style="left:565.5px;top:331px;font-size:12px;line-height:14px;color:#000;transform:scaleX(1.0467);font-weight:bold;">0</div>
<div class="t" style="left:214.4px;top:347px;font-size:12px;line-height:14px;color:#000;transform:scaleX(0.8599);">Max Degree of Parallelism</div>
<div class="t" style="left:565.5px;top:347px;font-size:12px;line-height:14px;color:#000;transform:scaleX(1.0467);font-weight:bold;">0</div>
<div class="t" style="left:214.4px;top:363px;font-size:12px;line-height:14px;color:#000;transform:scaleX(0.8627);">Query Wait</div>
<div class="t" style="left:565.5px;top:363px;font-size:12px;line-height:14px;color:#000;transform:scaleX(0.9370);font-weight:bold;">-1</div>
<div class="t" style="left:200.6px;top:507px;font-size:12px;line-height:14px;color:#000;transform:scaleX(1.0218);font-weight:bold;">Max Text Replication Size</div>
<div class="t" style="left:200.7px;top:522px;font-size:12px;line-height:14px;color:#000;transform:scaleX(0.8860);">Specify the maximum data that can be added to a replicated column in a single </div>
<div class="t" style="left:574.8px;top:522px;font-size:12px;line-height:14px;color:#000;transform:scaleX(0.9188);">INSERT, UPDATE, WRITETEXT, or UPDATETEXT </div>
<div class="t" style="left:826.4px;top:522px;font-size:12px;line-height:14px;color:#000;transform:scaleX(0.8620);">statement.</div>
<div class="t" style="left:213.2px;top:580px;font-size:12px;line-height:14px;color:#000;transform:scaleX(0.8818);"><u>C</u>onfigured values</div>
<div class="t" style="left:405.6px;top:580px;font-size:12px;line-height:14px;color:#000;transform:scaleX(0.8944);"><u>R</u>unning values</div>
<div class="t" style="left:819.2px;top:636px;font-size:12px;line-height:14px;color:#000;transform:scaleX(0.9341);">OK</div>
<div class="t" style="left:893.8px;top:636px;font-size:12px;line-height:14px;color:#000;transform:scaleX(0.9154);">Cancel</div>
<!-- red annotation rectangle -->
<div class="abs" style="left:200px;top:193px;width:627px;height:28px;border:1px solid #f00"></div>

</body></html>
